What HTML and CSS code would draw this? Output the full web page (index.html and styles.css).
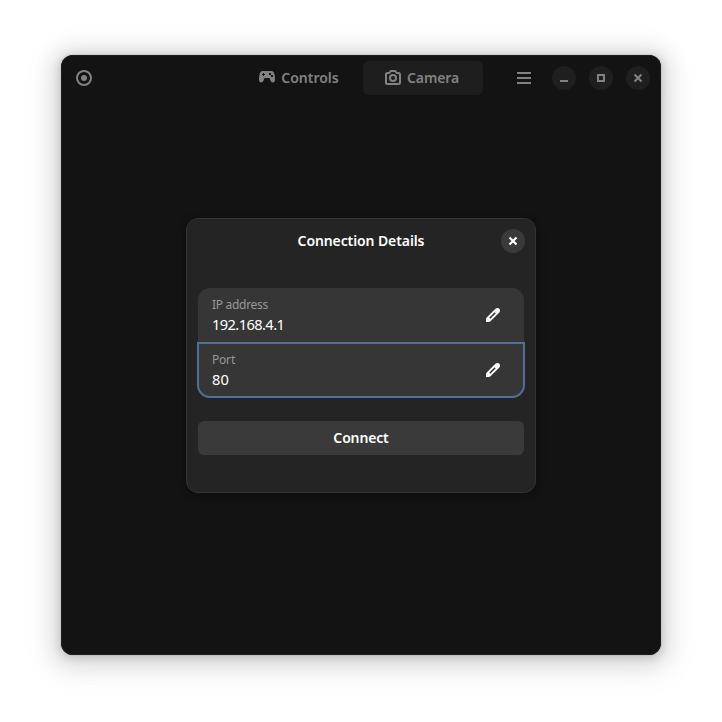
FILE: index.html
```html
<!DOCTYPE html>
<html lang="en">
<head>
<meta charset="utf-8">
<title>Connection Details</title>
<link rel="stylesheet" href="styles.css">
</head>
<body>
<main class="window">
  <header class="header">
    <button class="record" aria-label="Record"><svg class="icon" viewBox="0 0 16 16"><circle cx="8" cy="8" r="7" fill="none" stroke="currentColor" stroke-width="2"/><circle cx="8" cy="8" r="3"/></svg></button>
    <nav class="tabs">
      <button class="tab"><svg class="icon" viewBox="0 0 16 16"><path fill-rule="evenodd" d="M4 1C1.500 1 .7 3 .3 5.500C0 7.500 0 9.500.1 10.500C.3 13 3.600 13 4.300 11L5 9.200C5.300 8.300 5.500 8 6 8h4c.5 0 .7.3 1 1.200l.7 1.800c.7 2 4 2 4.200-.5.100-1.300.1-3-.2-5C15.300 3 14.500 1 12 1zM4 3h1v1h1v1H5v1H4V5H3V4h1zM10 3h2v2h-2zM12 5h2v2h-2z"/></svg><span class="controls-label">Controls</span></button>
      <button class="tab active"><svg class="icon" viewBox="0 0 16 16"><path fill="none" stroke="currentColor" stroke-width="2" stroke-linejoin="round" d="M2.500 3H4.300L5.800 1h4.400l1.500 2h1.800Q15 3 15 4.500v8q0 1.500-1.500 1.500h-11Q1 14 1 12.500v-8Q1 3 2.500 3z"/><circle cx="8" cy="8" r="3" fill="none" stroke="currentColor" stroke-width="2"/></svg><span class="camera-label">Camera</span></button>
    </nav>
    <div class="actions">
      <button class="menu" aria-label="Menu"><svg class="icon" viewBox="0 0 16 16"><path d="M1 2h14v2H1zm0 5h14v2H1zm0 5h14v2H1z"/></svg></button>
      <button class="round" aria-label="Minimize"><svg class="icon" viewBox="0 0 16 16"><path d="M4 10h8v2H4z"/></svg></button>
      <button class="round" aria-label="Maximize"><svg class="icon" viewBox="0 0 16 16"><path fill-rule="evenodd" d="M4 4h8v8H4zm2 2v4h4V6z"/></svg></button>
      <button class="round" aria-label="Close"><svg class="icon" viewBox="0 0 16 16"><path fill="none" stroke="currentColor" stroke-width="2" d="M4.500 4.500l7 7m0-7l-7 7"/></svg></button>
    </div>
  </header>
  <section class="dialog">
    <div class="dialog-head">
      <h1 class="title">Connection Details</h1>
      <button class="round dialog-close" aria-label="Close"><svg class="icon" viewBox="0 0 16 16"><path fill="none" stroke="currentColor" stroke-width="2.200" d="M4.500 4.500l7 7m0-7l-7 7"/></svg></button>
    </div>
    <div class="rows">
      <div class="row"><div class="entry"><span class="label ip-label">IP address</span><span class="value ip-value">192.168.4.1</span></div><svg class="icon" viewBox="0 0 16 16"><path fill-rule="evenodd" d="M10.200 1.900C11.800.5 13.400.8 14.300 1.700c.9.9 1.200 2.500-.2 4.100L5.500 14.300Q4.800 15 3.800 15H1v-2.800q0-1 .7-1.700zM4.200 10.700l1.100 1.100 5.500-5.500-1.100-1.100z"/></svg></div>
      <div class="row focused"><div class="entry"><span class="label port-label">Port</span><span class="value">80</span></div><svg class="icon" viewBox="0 0 16 16"><path fill-rule="evenodd" d="M10.200 1.900C11.800.5 13.400.8 14.300 1.700c.9.9 1.200 2.500-.2 4.100L5.500 14.300Q4.800 15 3.800 15H1v-2.800q0-1 .7-1.700zM4.200 10.700l1.100 1.100 5.500-5.500-1.100-1.100z"/></svg></div>
    </div>
    <button class="connect"><span class="connect-label">Connect</span></button>
  </section>
</main>
</body>
</html>
```

FILE: styles.css
```css
* { box-sizing: border-box; }
body {
  margin: 0;
  padding: 55px 61px;
  height: 722px;
  background: #fff;
  overflow: hidden;
  font-family: "Noto Sans", sans-serif;
}
button {
  border: 0;
  padding: 0;
  background: none;
  color: inherit;
  font: inherit;
}
.icon { display: block; width: 16px; height: 16px; fill: currentColor; flex: none; overflow: visible; }
.window {
  width: 600px;
  height: 600px;
  border-radius: 12px;
  background: #131313;
  color: #828282;
  box-shadow: inset 0 0 0 1px #1d1d1d, 0 0 0 1px rgba(0,0,0,.05), 0 2px 8px 2px rgba(0,0,0,.13), 0 3px 20px 10px rgba(0,0,0,.09), 0 6px 32px 16px rgba(0,0,0,.04);
}
.header {
  display: grid;
  grid-template-columns: 178px 244px 1fr;
  align-items: center;
  height: 46px;
}
.record { margin-left: 15px; justify-self: start; }
.tabs { display: flex; gap: 4px; }
.tab {
  display: flex;
  align-items: center;
  justify-content: center;
  gap: 6px;
  width: 120px;
  height: 34px;
  border-radius: 6px;
  font-size: 14px;
  font-weight: 600;
  line-height: 20px;
  white-space: nowrap;
}
.active { background: #1e1e1e; padding-right: 2px; }
.camera-label { letter-spacing: -.15px; }
.actions { display: flex; align-items: center; justify-content: flex-end; gap: 13px; padding-right: 11px; }
.menu { margin-right: 7px; }
.round {
  display: flex;
  align-items: center;
  justify-content: center;
  width: 24px;
  height: 24px;
  border-radius: 50%;
  background: #1f1f1f;
}
.dialog {
  width: 350px;
  height: 275px;
  margin: 117px 0 0 125px;
  padding: 0 11px;
  border: 1px solid #343434;
  border-radius: 12px;
  background: #242424;
  color: #fff;
  box-shadow: 0 2px 7px 2px rgba(0,0,0,.25);
}
.dialog-head {
  display: grid;
  grid-template-columns: 24px 1fr 24px;
  align-items: center;
  height: 43px;
  margin-right: -1px;
  margin-bottom: 26px;
}
.title { grid-column: 2; margin: 0 1px 0 0; font-size: 14px; font-weight: 600; line-height: 20px; letter-spacing: -.1px; text-align: center; white-space: nowrap; }
.dialog-close { background: #3a3a3a; }
.rows { background: #363636; border-radius: 12px; }
.row {
  display: flex;
  align-items: center;
  justify-content: space-between;
  height: 54px;
  padding: 0 23px 0 14px;
}
.focused {
  height: 56px;
  margin: 0 -1px;
  padding: 0 22px 0 13px;
  border: 2px solid #506f99;
  border-radius: 0 0 13px 13px;
}
.entry { display: flex; flex-direction: column; align-items: flex-start; }
.label { font-size: 12px; line-height: 18px; color: #979797; }
.ip-label { letter-spacing: -.3px; }
.port-label { letter-spacing: -.2px; }
.value { font-size: 14.667px; line-height: 21px; }
.ip-value { letter-spacing: -.6px; }
.connect {
  display: block;
  width: 326px;
  height: 34px;
  margin-top: 23px;
  border-radius: 6px;
  background: #3a3a3a;
  font-size: 14px;
  font-weight: 600;
  line-height: 20px;
}
.connect-label { letter-spacing: -.15px; }
```
